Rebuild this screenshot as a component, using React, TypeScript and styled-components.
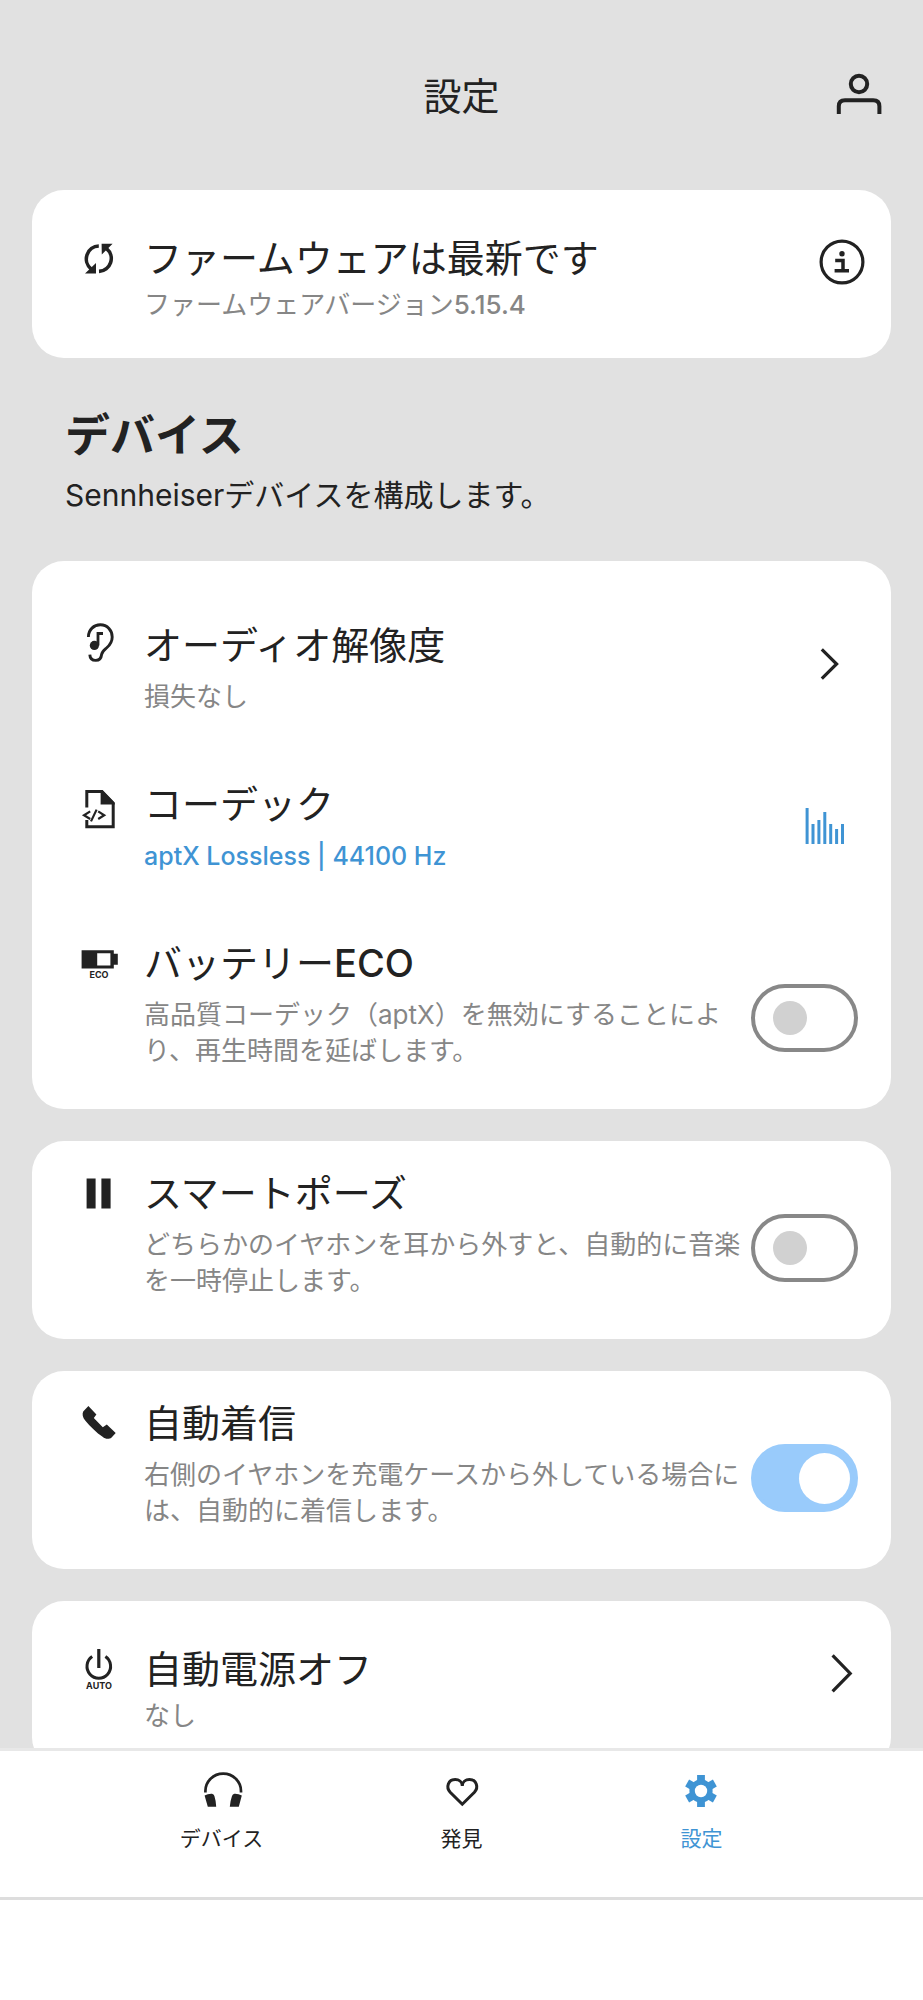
import React, { useState } from "react";
import styled, { createGlobalStyle } from "styled-components";

const ink = "#222222";
const muted = "#868686";
const accent = "#3f94d4";

const GlobalStyle = createGlobalStyle`
  * { box-sizing: border-box; }
  body {
    margin: 0;
    background: #e1e1e1;
    color: ${ink};
    font-family: Inter, "Noto Sans CJK JP", sans-serif;
  }
  h1, h2, h3, p { margin: 0; }
`;

const Screen = styled.div`
  display: flex;
  flex-direction: column;
  height: 100vh;
`;

const Scroller = styled.div`
  flex: 1;
  min-height: 0;
  overflow-y: auto;
  scrollbar-width: none;
`;

const Header = styled.header`
  display: grid;
  grid-template-columns: 1fr auto 1fr;
  align-items: start;
  padding: 68px 40px 66px;
`;

const PageTitle = styled.h1`
  grid-column: 2;
  font-size: 38px;
  line-height: 56px;
  font-weight: 400;
`;

const IconButton = styled.button`
  display: block;
  width: 48px;
  height: 48px;
  padding: 0;
  border: 0;
  background: none;
  color: inherit;
  cursor: pointer;
  svg { display: block; }
`;

const ProfileButton = styled(IconButton)`
  justify-self: end;
  margin-top: 2px;
`;

const Content = styled.main`
  display: flex;
  flex-direction: column;
  gap: 32px;
  padding: 0 32px 32px;
`;

const SectionHead = styled.section`
  padding: 14px 33px 12px;
`;

const SectionTitle = styled.h2`
  font-size: 45px;
  line-height: 64px;
  font-weight: 700;
`;

const SectionText = styled.p`
  margin-top: 5px;
  font-size: 30px;
  line-height: 44px;
`;

type CardKind = "plain" | "group" | "toggle";
const cardPadding: Record<CardKind, string> = {
  plain: "40px 25px 35px 47px",
  group: "56px 25px 40px 47px",
  toggle: "24px 25px 40px 47px",
};

const Card = styled.section<{ $kind: CardKind }>`
  display: flex;
  flex-direction: column;
  gap: 61px;
  padding: ${(p) => cardPadding[p.$kind]};
  border-radius: 32px;
  background: #ffffff;
`;

const Row = styled.div`
  display: flex;
  align-items: flex-start;
`;

const Leading = styled.span`
  flex: none;
  width: 40px;
  height: 56px;
  margin-right: 25px;
  svg { display: block; }
`;

const RowText = styled.div<{ $gap: number }>`
  flex: 1;
  min-width: 0;
  display: flex;
  flex-direction: column;
  gap: ${(p) => p.$gap}px;
`;

const RowTitle = styled.h3`
  font-size: 38px;
  line-height: 56px;
  font-weight: 400;
`;

const RowNote = styled.p<{ $accent?: boolean }>`
  font-size: ${(p) => (p.$accent ? 25 : 26)}px;
  line-height: 36px;
  font-weight: ${(p) => (p.$accent ? 500 : 400)};
  color: ${(p) => (p.$accent ? accent : muted)};
`;

const Latin = styled.span`
  font-weight: 500;
`;

const Trailing = styled.div<{ $top: number; $inset: number }>`
  flex: none;
  margin-top: ${(p) => p.$top}px;
  margin-right: ${(p) => p.$inset}px;
  margin-bottom: -24px;
`;

const Switch = styled.input`
  appearance: none;
  display: flex;
  align-items: center;
  width: 107px;
  height: 68px;
  margin: 0 0 0 6px;
  padding: 0 18px;
  border: 4px solid #888888;
  border-radius: 34px;
  background: #ffffff;
  cursor: pointer;
  &::before {
    content: "";
    width: 34px;
    height: 34px;
    border-radius: 50%;
    background: #d1d1d1;
  }
  &:checked {
    justify-content: flex-end;
    padding: 0 4px;
    border-color: #99cbfb;
    background: #99cbfb;
  }
  &:checked::before {
    width: 51px;
    height: 51px;
    background: #ffffff;
  }
`;

const TabBar = styled.nav`
  flex: none;
  display: flex;
  justify-content: center;
  padding: 19px 0 43px;
  border-top: 3px solid #e8e8e8;
  border-bottom: 3px solid #dddddd;
  background: #ffffff;
`;

const Tab = styled.a<{ $active?: boolean }>`
  display: flex;
  flex-direction: column;
  align-items: center;
  gap: 14px;
  width: 26%;
  color: ${(p) => (p.$active ? accent : ink)};
  font-size: 21px;
  line-height: 30px;
  text-decoration: none;
  svg { display: block; overflow: visible; }
`;

const BottomSpace = styled.div`
  flex: none;
  height: 100px;
  background: #ffffff;
`;

function LeadIcon({ children }: { children: React.ReactNode }) {
  return (
    <Leading>
      <svg width="40" height="56" viewBox="0 0 40 56" fill="none" stroke={ink} aria-hidden="true">
        {children}
      </svg>
    </Leading>
  );
}

const Caption = styled.text`
  font-family: Inter, sans-serif;
  font-size: 9px;
  font-weight: 700;
  fill: ${ink};
  stroke: none;
  text-anchor: middle;
`;

const RefreshIcon = () => (
  <LeadIcon>
    <path strokeWidth="3.6" d="M19.8 16A12.9 12.9 0 0 0 12 38.8M20 41.4A12.9 12.9 0 0 0 27.6 18.6" />
    <path fill={ink} stroke="none" d="M22.6 13.8H33.6L22.8 24.4zM17 33V43.4H6z" />
  </LeadIcon>
);

const EarIcon = () => (
  <LeadIcon>
    <path
      strokeWidth="2.9"
      d="M9.4 20C9.4 12.5 15 7.8 21.3 7.8C28.5 7.8 33.2 13.5 33.2 20C33.2 25.5 30.5 28.5 27.5 31C24.5 33.5 23 34.5 22.6 37.5C22.2 41.5 20 43.4 16.8 43.4C13.3 43.4 11 41.2 10.8 37.6"
    />
    <path strokeWidth="2.8" d="M24 16.5h-5v12" />
    <circle cx="15.4" cy="28.4" r="4.6" fill={ink} stroke="none" />
  </LeadIcon>
);

const CodecIcon = () => (
  <LeadIcon>
    <path strokeWidth="3" d="M7.8 31.6V15.4H23L34.2 27V50.8H7.8V44" />
    <path fill={ink} stroke="none" d="M21.6 14.5H23.6L35.7 27V28.4H21.6z" />
    <path strokeWidth="2.2" d="M11.2 35.4L5 39.2L11.2 43M19.2 35.4L25.2 39.2L19.2 43M17.6 33.6L12 45.4" />
  </LeadIcon>
);

const BatteryIcon = () => (
  <LeadIcon>
    <path
      fill={ink}
      stroke="none"
      fillRule="evenodd"
      d="M2.6 15.2H34.8V18.8H38.8V29.8H34.8V33.4H2.6zM18.2 18.2V30.6H31.4V18.2z"
    />
    <Caption x="20" y="42.8">ECO</Caption>
  </LeadIcon>
);

const PauseIcon = () => (
  <LeadIcon>
    <path fill={ink} stroke="none" d="M7.6 13.4H16.6V43.4H7.6zM22.4 13.4H31.6V43.4H22.4z" />
  </LeadIcon>
);

const PhoneIcon = () => (
  <LeadIcon>
    <path
      fill={ink}
      stroke="none"
      d="M9.4 11L17.4 19.4L14.8 23L23.8 32.2L27.8 29.6L36.7 38L32.6 42.4C30 44.6 26.4 44.2 23.6 41.8C17.6 37.6 11 31.2 6.2 25.4C3.6 22.4 3 18.8 4.2 16.4z"
    />
  </LeadIcon>
);

const PowerIcon = () => (
  <LeadIcon>
    <path strokeWidth="3" d="M13.2 15.6A11.8 11.8 0 1 0 26.4 15.6" />
    <path strokeWidth="3.2" d="M19.8 8V27" />
    <Caption x="20" y="48">AUTO</Caption>
  </LeadIcon>
);

const ProfileIcon = () => (
  <svg width="48" height="48" viewBox="0 0 48 48" fill="none" stroke={ink} strokeWidth="4" aria-hidden="true">
    <circle cx="24" cy="14" r="8.2" />
    <path d="M3.8 44V36.2Q3.8 30.2 10 30.2H38.2Q44.4 30.2 44.4 36.2V44" />
  </svg>
);

const InfoIcon = () => (
  <svg width="48" height="48" viewBox="0 0 48 48" fill="none" stroke={ink} aria-hidden="true">
    <circle cx="24" cy="24" r="20.9" strokeWidth="3.2" />
    <circle cx="24" cy="15.8" r="2.7" fill={ink} stroke="none" />
    <path strokeWidth="3.5" d="M17.2 22.6H25V32.8M16.6 32.8H31" />
  </svg>
);

const ChevronIcon = ({ large }: { large?: boolean }) => (
  <svg width="48" height="48" viewBox="0 0 48 48" fill="none" stroke={ink} strokeWidth="3.2" aria-hidden="true">
    <path d={large ? "M14.6 6.4L32.2 24.4L14.6 42.4" : "M15.8 9.4L30.6 24L15.8 38.6"} />
  </svg>
);

const levels = [9, 25, 21, 13, 25, 30, 25];
const BarsIcon = () => (
  <svg width="48" height="48" viewBox="0 0 48 48" fill={accent} aria-hidden="true">
    {levels.map((top, i) => (
      <rect key={i} x={4.6 + i * 5.9} y={top} width="3" height={45 - top} />
    ))}
  </svg>
);

const HeadphonesIcon = () => (
  <svg width="40" height="40" viewBox="0 0 40 40" fill="none" aria-hidden="true">
    <path stroke={ink} strokeWidth="2.7" d="M3.4 22.4V21A17.8 17.4 0 0 1 39 21V22.4" />
    <path
      fill={ink}
      d="M2.6 25.4Q6 23.6 10 23.8Q11.8 24 12.4 26Q14 31 14.2 36.8H5.8zM39.8 25.4Q36.4 23.6 32.4 23.8Q30.6 24 30 26Q28.2 31 27.8 36.8H36.8z"
    />
  </svg>
);

const HeartIcon = () => (
  <svg width="40" height="40" viewBox="0 0 40 40" fill="none" stroke={ink} strokeWidth="3" aria-hidden="true">
    <path d="M20.3 34.2L8.2 22.2C3.6 17 6.2 9.6 13.2 9.6C17.2 9.6 20.3 12.2 20.3 16C20.3 12.2 23.4 9.6 27.4 9.6C34.4 9.6 37 17 32.4 22.2z" />
  </svg>
);

const GearIcon = () => (
  <svg width="40" height="40" viewBox="0 0 40 40" fill={accent} aria-hidden="true">
    <circle cx="20" cy="21" r="11.6" />
    {[0, 60, 120].map((turn) => (
      <rect key={turn} x="16.1" y="5" width="7.8" height="32" transform={`rotate(${turn} 20 21)`} />
    ))}
    <circle cx="20" cy="21" r="6.2" fill="#ffffff" />
  </svg>
);

interface ToggleRowProps {
  id: string;
  icon: React.ReactNode;
  title: React.ReactNode;
  note: string;
  initial?: boolean;
}

function ToggleRow({ id, icon, title, note, initial = false }: ToggleRowProps) {
  const [on, setOn] = useState(initial);
  return (
    <Row>
      {icon}
      <RowText $gap={6}>
        <RowTitle>
          <label htmlFor={id}>{title}</label>
        </RowTitle>
        <RowNote>{note}</RowNote>
      </RowText>
      <Trailing $top={49} $inset={8}>
        <Switch id={id} type="checkbox" role="switch" checked={on} onChange={(e) => setOn(e.target.checked)} />
      </Trailing>
    </Row>
  );
}

export default function App() {
  return (
    <Screen>
      <GlobalStyle />
      <Scroller>
        <Header>
          <PageTitle>設定</PageTitle>
          <ProfileButton type="button" aria-label="アカウント">
            <ProfileIcon />
          </ProfileButton>
        </Header>
        <Content>
          <Card $kind="plain">
            <Row>
              <RefreshIcon />
              <RowText $gap={1}>
                <RowTitle>ファームウェアは最新です</RowTitle>
                <RowNote>
                  ファームウェアバージョン<Latin>5.15.4</Latin>
                </RowNote>
              </RowText>
              <Trailing $top={8} $inset={0}>
                <IconButton type="button" aria-label="情報">
                  <InfoIcon />
                </IconButton>
              </Trailing>
            </Row>
          </Card>

          <SectionHead>
            <SectionTitle>デバイス</SectionTitle>
            <SectionText>Sennheiserデバイスを構成します。</SectionText>
          </SectionHead>

          <Card $kind="group">
            <Row>
              <EarIcon />
              <RowText $gap={6}>
                <RowTitle>オーディオ解像度</RowTitle>
                <RowNote>損失なし</RowNote>
              </RowText>
              <Trailing $top={23} $inset={12}>
                <IconButton type="button" aria-label="オーディオ解像度">
                  <ChevronIcon />
                </IconButton>
              </Trailing>
            </Row>
            <Row>
              <CodecIcon />
              <RowText $gap={6}>
                <RowTitle>コーデック</RowTitle>
                <RowNote $accent>aptX Lossless | 44100 Hz</RowNote>
              </RowText>
              <Trailing $top={23} $inset={17}>
                <BarsIcon />
              </Trailing>
            </Row>
            <ToggleRow
              id="battery-eco"
              icon={<BatteryIcon />}
              title={
                <>
                  バッテリー<Latin>ECO</Latin>
                </>
              }
              note="高品質コーデック（aptX）を無効にすることにより、再生時間を延ばします。"
            />
          </Card>

          <Card $kind="toggle">
            <ToggleRow
              id="smart-pause"
              icon={<PauseIcon />}
              title="スマートポーズ"
              note="どちらかのイヤホンを耳から外すと、自動的に音楽を一時停止します。"
            />
          </Card>

          <Card $kind="toggle">
            <ToggleRow
              id="auto-answer"
              icon={<PhoneIcon />}
              title="自動着信"
              note="右側のイヤホンを充電ケースから外している場合には、自動的に着信します。"
              initial
            />
          </Card>

          <Card $kind="plain">
            <Row>
              <PowerIcon />
              <RowText $gap={1}>
                <RowTitle>自動電源オフ</RowTitle>
                <RowNote>なし</RowNote>
              </RowText>
              <Trailing $top={8} $inset={0}>
                <IconButton type="button" aria-label="自動電源オフ">
                  <ChevronIcon large />
                </IconButton>
              </Trailing>
            </Row>
          </Card>
        </Content>
      </Scroller>
      <TabBar>
        <Tab href="#device">
          <HeadphonesIcon />
          デバイス
        </Tab>
        <Tab href="#discover">
          <HeartIcon />
          発見
        </Tab>
        <Tab href="#settings" $active aria-current="page">
          <GearIcon />
          設定
        </Tab>
      </TabBar>
      <BottomSpace />
    </Screen>
  );
}
